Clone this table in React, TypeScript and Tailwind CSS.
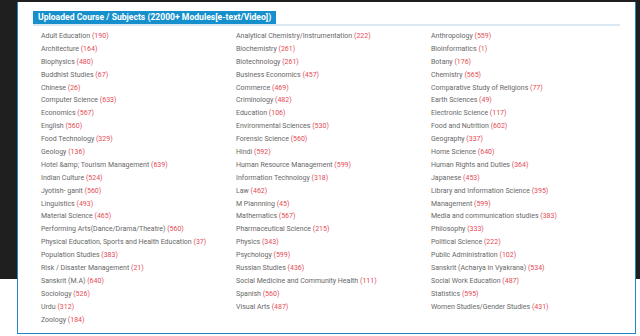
import React from "react";

const col1: [string, number][] = [
  ["Adult Education", 190],
  ["Architecture", 164],
  ["Biophysics", 480],
  ["Buddhist Studies", 67],
  ["Chinese", 26],
  ["Computer Science", 633],
  ["Economics", 567],
  ["English", 560],
  ["Food Technology", 329],
  ["Geology", 136],
  ["Hotel &amp; Tourism Management", 639],
  ["Indian Culture", 524],
  ["Jyotish- ganit", 560],
  ["Linguistics", 493],
  ["Material Science", 465],
  ["Performing Arts(Dance/Drama/Theatre)", 560],
  ["Physical Education, Sports and Health Education", 37],
  ["Population Studies", 383],
  ["Risk / Disaster Management", 21],
  ["Sanskrit (M.A)", 640],
  ["Sociology", 526],
  ["Urdu", 312],
  ["Zoology", 184],
];

const col2: [string, number][] = [
  ["Analytical Chemistry/Instrumentation", 222],
  ["Biochemistry", 261],
  ["Biotechnology", 261],
  ["Business Economics", 457],
  ["Commerce", 469],
  ["Criminology", 482],
  ["Education", 106],
  ["Environmental Sciences", 530],
  ["Forensic Science", 560],
  ["Hindi", 592],
  ["Human Resource Management", 599],
  ["Information Technology", 318],
  ["Law", 462],
  ["M Plannning", 45],
  ["Mathematics", 567],
  ["Pharmaceutical Science", 215],
  ["Physics", 343],
  ["Psychology", 599],
  ["Russian Studies", 436],
  ["Social Medicine and Community Health", 111],
  ["Spanish", 560],
  ["Visual Arts", 487],
];

const col3: [string, number][] = [
  ["Anthropology", 559],
  ["Bioinformatics", 1],
  ["Botany", 176],
  ["Chemistry", 565],
  ["Comparative Study of Religions", 77],
  ["Earth Sciences", 49],
  ["Electronic Science", 117],
  ["Food and Nutrition", 602],
  ["Geography", 337],
  ["Home Science", 640],
  ["Human Rights and Duties", 364],
  ["Japanese", 453],
  ["Library and Information Science", 395],
  ["Management", 599],
  ["Media and communication studies", 383],
  ["Philosophy", 333],
  ["Political Science", 222],
  ["Public Administration", 102],
  ["Sanskrit (Acharya in Vyakrana)", 534],
  ["Social Work Education", 487],
  ["Statistics", 595],
  ["Women Studies/Gender Studies", 431],
];

function Column({ items }: { items: [string, number][] }) {
  return (
    <ul className="flex flex-col">
      {items.map(([name, n]) => (
        <li key={name} className="h-[12.9px] leading-[12.9px] whitespace-nowrap text-[7px] text-[#686868]">
          {name} <span className="text-[#e24b55]">({n})</span>
        </li>
      ))}
    </ul>
  );
}

export default function App() {
  return (
    <div
      className="w-[640px] h-[336px] overflow-hidden bg-[linear-gradient(to_bottom,#1f1f1f_279px,#ffffff_279px)] pt-[2px] pl-[17px]"
      style={{ fontFamily: "Roboto, 'Liberation Sans', sans-serif" }}
    >
      <div className="w-[619px] h-[332px] bg-white border-x border-b border-[#1f87c4] pt-[9px] pl-[15px] pr-[15px]">
        <div className="border-b-2 border-[#dae8f3] flex">
          <div className="bg-[#1590cc] text-white font-bold text-[8.6px] h-[13px] leading-[13px] px-[5px] whitespace-nowrap">
            Uploaded Course / Subjects (22000+ Modules[e-text/Video])
          </div>
        </div>
        <div className="grid grid-cols-[195px_195px_195px] pl-[8px] pt-[4px]">
          <Column items={col1} />
          <Column items={col2} />
          <Column items={col3} />
        </div>
      </div>
    </div>
  );
}
